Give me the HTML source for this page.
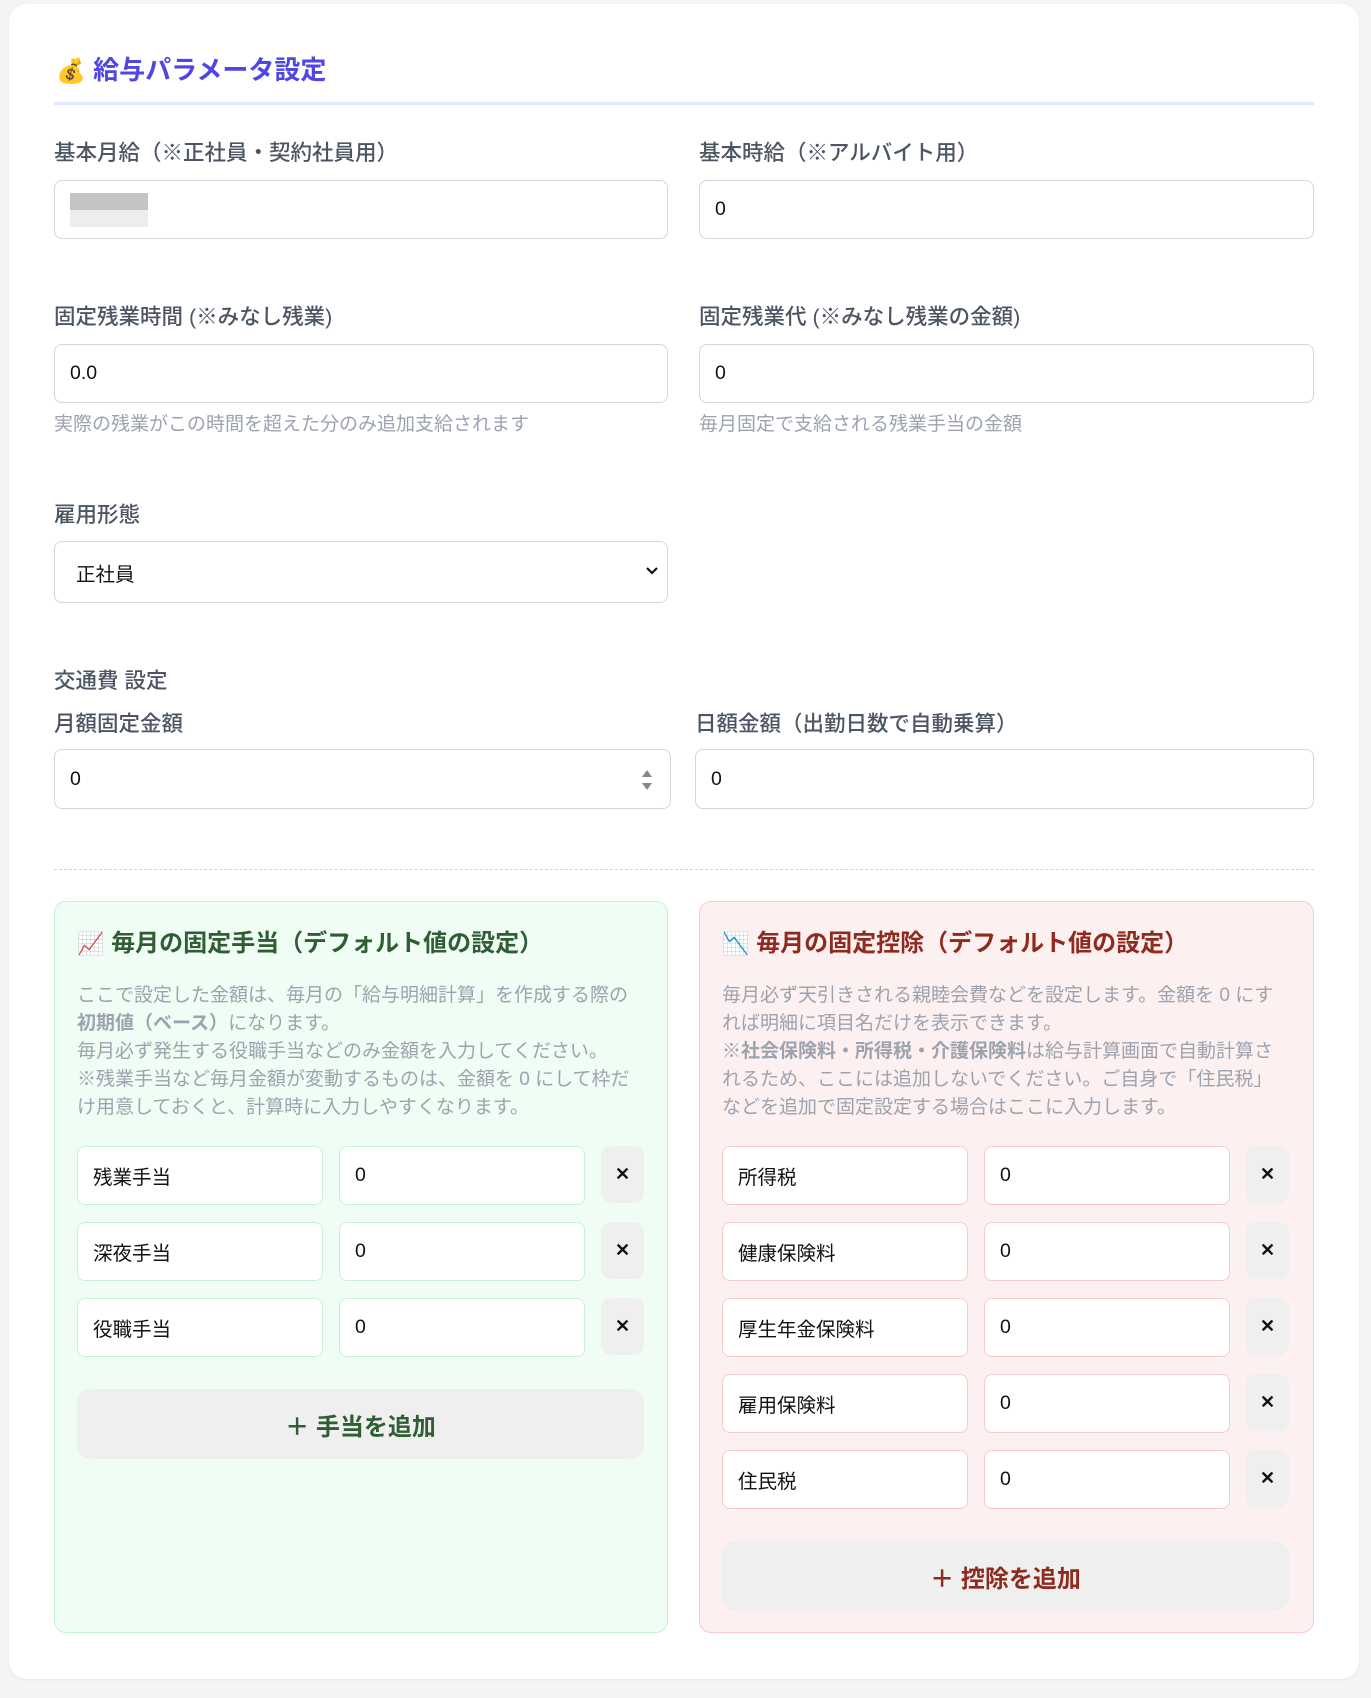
<!DOCTYPE html>
<html><head><meta charset="utf-8"><style>
*{box-sizing:border-box;margin:0;padding:0}
body{width:1371px;height:1698px;background:#f3f4f6;font-family:"Liberation Sans","Noto Sans CJK JP",sans-serif;position:relative;overflow:hidden}
.card{position:absolute;left:9px;top:4px;width:1350px;height:1675px;background:#fff;border-radius:18px;box-shadow:0 1px 4px rgba(0,0,0,.05)}
.a{position:absolute}
.title{left:56px;top:52px;font-size:26px;font-weight:700;color:#4f46e5;line-height:36px}
.hr{left:54px;top:102px;width:1260px;height:3px;background:#e0e7ff}
.lbl{font-size:21.5px;color:#4b5563;line-height:30px;font-weight:500}
.inp{border:1px solid #cfd6e0;border-radius:8px;background:#fff;font-size:19.5px;color:#111;padding-left:15px;display:flex;align-items:center}
.hint{font-size:19px;color:#9ca3af;line-height:26px}
.panel{border-radius:12px;border:1px solid}
.ph{font-size:24px;font-weight:700;line-height:32px}
.desc{font-size:19px;color:#9ca3af;line-height:28px;white-space:nowrap}
.ri{border-radius:8px;background:#fff;border:1px solid;font-size:19.5px;color:#111;padding-left:15px;display:flex;align-items:center}
.x{background:#efefef;border-radius:10px;display:flex;align-items:center;justify-content:center;font-size:18px;font-weight:700;color:#111}
.add{background:#efefef;border-radius:14px;display:flex;align-items:center;justify-content:center;font-size:24px;font-weight:700}
</style></head><body>
<div class="card"></div>
<div class="a title"><span style="font-size:24px">💰</span> 給与パラメータ設定</div>
<div class="a hr"></div>

<div class="a lbl" style="left:54px;top:138px">基本月給（※正社員・契約社員用）</div>
<div class="a lbl" style="left:699px;top:138px">基本時給（※アルバイト用）</div>
<div class="a inp" style="left:54px;top:180px;width:614px;height:59px"><div style="width:78px;height:34px;background:linear-gradient(#c4c4c6 0 50%,#ededee 50%)"></div></div>
<div class="a inp" style="left:699px;top:180px;width:615px;height:59px">0</div>

<div class="a lbl" style="left:54px;top:302px">固定残業時間 (※みなし残業)</div>
<div class="a lbl" style="left:699px;top:302px">固定残業代 (※みなし残業の金額)</div>
<div class="a inp" style="left:54px;top:344px;width:614px;height:59px">0.0</div>
<div class="a inp" style="left:699px;top:344px;width:615px;height:59px">0</div>
<div class="a hint" style="left:54px;top:412px">実際の残業がこの時間を超えた分のみ追加支給されます</div>
<div class="a hint" style="left:699px;top:412px">毎月固定で支給される残業手当の金額</div>

<div class="a lbl" style="left:54px;top:500px">雇用形態</div>
<div class="a inp" style="left:54px;top:541px;width:614px;height:62px;padding-left:21px">正社員
<svg class="a" style="right:8px;top:24px" width="14" height="10" viewBox="0 0 14 10"><path d="M2 2l5 5 5-5" stroke="#111" stroke-width="2.2" fill="none"/></svg></div>

<div class="a lbl" style="left:54px;top:666px">交通費 設定</div>
<div class="a lbl" style="left:54px;top:709px">月額固定金額</div>
<div class="a lbl" style="left:695px;top:709px">日額金額（出勤日数で自動乗算）</div>
<div class="a inp" style="left:54px;top:749px;width:617px;height:60px">0
<svg class="a" style="right:16px;top:16px" width="14" height="28" viewBox="0 0 14 28"><path d="M2 11l5-7 5 7z M2 17l5 7 5-7z" fill="#888"/></svg></div>
<div class="a inp" style="left:695px;top:749px;width:619px;height:60px">0</div>

<div class="a" style="left:54px;top:869px;width:1260px;border-top:1px dashed #d1d5db"></div>

<div class="a panel" style="left:54px;top:901px;width:614px;height:732px;background:#f0fdf4;border-color:#bbf7d0"></div>
<div class="a panel" style="left:699px;top:901px;width:615px;height:732px;background:#fdf0f0;border-color:#fbcaca"></div>

<div class="a ph" style="left:77px;top:928px;color:#2f5d34"><span style="font-size:22px">📈</span> 毎月の固定手当（デフォルト値の設定）</div>
<div class="a desc" style="left:77px;top:982px">ここで設定した金額は、毎月の「給与明細計算」を作成する際の<br><b>初期値（ベース）</b>になります。<br>毎月必ず発生する役職手当などのみ金額を入力してください。<br>※残業手当など毎月金額が変動するものは、金額を 0 にして枠だ<br>け用意しておくと、計算時に入力しやすくなります。</div>

<div class="a ph" style="left:722px;top:928px;color:#8f2a1e"><span style="font-size:22px">📉</span> 毎月の固定控除（デフォルト値の設定）</div>
<div class="a desc" style="left:722px;top:982px">毎月必ず天引きされる親睦会費などを設定します。金額を 0 にす<br>れば明細に項目名だけを表示できます。<br>※<b>社会保険料・所得税・介護保険料</b>は給与計算画面で自動計算さ<br>れるため、ここには追加しないでください。ご自身で「住民税」<br>などを追加で固定設定する場合はここに入力します。</div>

<div class="a ri" style="left:77px;top:1146px;width:246px;height:59px;border-color:#c9f0d6">残業手当</div>
<div class="a ri" style="left:339px;top:1146px;width:246px;height:59px;border-color:#c9f0d6">0</div>
<div class="a x" style="left:601px;top:1146px;width:43px;height:57px">✕</div>
<div class="a ri" style="left:77px;top:1222px;width:246px;height:59px;border-color:#c9f0d6">深夜手当</div>
<div class="a ri" style="left:339px;top:1222px;width:246px;height:59px;border-color:#c9f0d6">0</div>
<div class="a x" style="left:601px;top:1222px;width:43px;height:57px">✕</div>
<div class="a ri" style="left:77px;top:1298px;width:246px;height:59px;border-color:#c9f0d6">役職手当</div>
<div class="a ri" style="left:339px;top:1298px;width:246px;height:59px;border-color:#c9f0d6">0</div>
<div class="a x" style="left:601px;top:1298px;width:43px;height:57px">✕</div>
<div class="a add" style="left:77px;top:1389px;width:567px;height:70px;color:#2f5d34">＋ 手当を追加</div>

<div class="a ri" style="left:722px;top:1146px;width:246px;height:59px;border-color:#f5cccc">所得税</div>
<div class="a ri" style="left:984px;top:1146px;width:246px;height:59px;border-color:#f5cccc">0</div>
<div class="a x" style="left:1246px;top:1146px;width:43px;height:57px">✕</div>
<div class="a ri" style="left:722px;top:1222px;width:246px;height:59px;border-color:#f5cccc">健康保険料</div>
<div class="a ri" style="left:984px;top:1222px;width:246px;height:59px;border-color:#f5cccc">0</div>
<div class="a x" style="left:1246px;top:1222px;width:43px;height:57px">✕</div>
<div class="a ri" style="left:722px;top:1298px;width:246px;height:59px;border-color:#f5cccc">厚生年金保険料</div>
<div class="a ri" style="left:984px;top:1298px;width:246px;height:59px;border-color:#f5cccc">0</div>
<div class="a x" style="left:1246px;top:1298px;width:43px;height:57px">✕</div>
<div class="a ri" style="left:722px;top:1374px;width:246px;height:59px;border-color:#f5cccc">雇用保険料</div>
<div class="a ri" style="left:984px;top:1374px;width:246px;height:59px;border-color:#f5cccc">0</div>
<div class="a x" style="left:1246px;top:1374px;width:43px;height:57px">✕</div>
<div class="a ri" style="left:722px;top:1450px;width:246px;height:59px;border-color:#f5cccc">住民税</div>
<div class="a ri" style="left:984px;top:1450px;width:246px;height:59px;border-color:#f5cccc">0</div>
<div class="a x" style="left:1246px;top:1450px;width:43px;height:57px">✕</div>
<div class="a add" style="left:722px;top:1541px;width:567px;height:70px;color:#8f2a1e">＋ 控除を追加</div>
</body></html>
